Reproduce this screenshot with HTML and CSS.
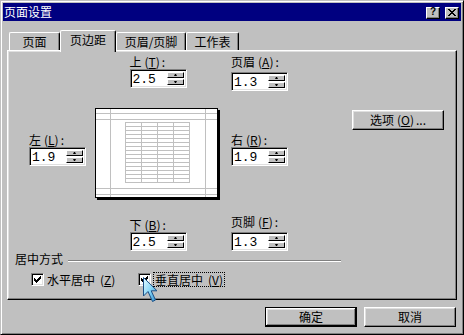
FILE: index.html
```html
<!DOCTYPE html>
<html lang="zh-CN">
<head>
<meta charset="utf-8">
<link rel="stylesheet" href="styles.css">
</head>
<body>
<div class="window">
  <div class="titlebar">
    <span class="title">页面设置</span>
    <div class="tb-buttons">
      <span class="tb-btn help">?</span>
      <span class="tb-btn close"><svg width="8" height="7" viewBox="0 0 8 7" shape-rendering="crispEdges"><path d="M0 0h2v1h-2zM6 0h2v1h-2zM1 1h2v1h-2zM5 1h2v1h-2zM2 2h4v1h-4zM3 3h2v1h-2zM2 4h4v1h-4zM1 5h2v1h-2zM5 5h2v1h-2zM0 6h2v1h-2zM6 6h2v1h-2z" fill="#000"/></svg></span>
    </div>
  </div>
  <div class="dialog">
    <div class="tabs">
      <div class="tab t1">页面</div>
      <div class="tab sel t2">页边距</div>
      <div class="tab t3">页眉/页脚</div>
      <div class="tab t4">工作表</div>
    </div>
    <div class="panel">
      <div class="margins">
        <div class="fld top">
          <div class="lbl">上<span class="acc">(<u>T</u>)</span>:</div>
          <div class="spin"><span class="val">2.5</span><span class="arrows"><span class="ab"><i class="up"></i></span><span class="ab"><i class="dn"></i></span></span></div>
        </div>
        <div class="fld header">
          <div class="lbl gap">页眉<span class="acc">(<u>A</u>)</span>:</div>
          <div class="spin"><span class="val">1.3</span><span class="arrows"><span class="ab"><i class="up"></i></span><span class="ab"><i class="dn"></i></span></span></div>
        </div>
        <div class="fld left">
          <div class="lbl">左<span class="acc">(<u>L</u>)</span>:</div>
          <div class="spin"><span class="val">1.9</span><span class="arrows"><span class="ab"><i class="up"></i></span><span class="ab"><i class="dn"></i></span></span></div>
        </div>
        <svg class="preview" width="125" height="92" viewBox="0 0 125 92" shape-rendering="crispEdges">
          <rect x="2" y="2" width="123" height="90" fill="#000"/>
          <rect x="0.5" y="0.5" width="122" height="89" fill="#fff" stroke="#000"/>
          <g stroke="#c0c0c0" fill="none">
            <path d="M15.5 1V89M110.5 1V89M1 5.5H122M1 11.5H122M1 80.5H122M1 86.5H122"/>
            <rect x="30.5" y="14.5" width="64" height="60"/>
            <path d="M46.5 14V75M62.5 14V75M78.5 14V75"/>
            <path d="M30 18.5H95M30 22.5H95M30 26.5H95M30 30.5H95M30 34.5H95M30 38.5H95M30 42.5H95M30 46.5H95M30 50.5H95M30 54.5H95M30 58.5H95M30 62.5H95M30 66.5H95M30 70.5H95"/>
          </g>
        </svg>
        <div class="fld right">
          <div class="lbl">右<span class="acc">(<u>R</u>)</span>:</div>
          <div class="spin"><span class="val">1.9</span><span class="arrows"><span class="ab"><i class="up"></i></span><span class="ab"><i class="dn"></i></span></span></div>
        </div>
        <button class="btn options">选项<span class="acc">(<u>O</u>)</span>...</button>
        <div class="fld bottom">
          <div class="lbl">下<span class="acc">(<u>B</u>)</span>:</div>
          <div class="spin"><span class="val">2.5</span><span class="arrows"><span class="ab"><i class="up"></i></span><span class="ab"><i class="dn"></i></span></span></div>
        </div>
        <div class="fld footer">
          <div class="lbl gap">页脚<span class="acc">(<u>F</u>)</span>:</div>
          <div class="spin"><span class="val">1.3</span><span class="arrows"><span class="ab"><i class="up"></i></span><span class="ab"><i class="dn"></i></span></span></div>
        </div>
      </div>
      <div class="group">
        <div class="group-head"><span>居中方式</span><span class="etch"></span></div>
        <div class="checks">
          <div class="check c1">
            <span class="box"><svg width="7" height="7" viewBox="0 0 7 7" shape-rendering="crispEdges"><path d="M0 2h1v3H0zM1 3h1v3H1zM2 4h1v3H2zM3 3h1v3H3zM4 2h1v3H4zM5 1h1v3H5zM6 0h1v3H6z" fill="#000"/></svg></span>
            <span class="ctext">水平居中<span class="acc">(<u>Z</u>)</span></span>
          </div>
          <div class="check c2">
            <span class="box"><svg width="7" height="7" viewBox="0 0 7 7" shape-rendering="crispEdges"><path d="M0 2h1v3H0zM1 3h1v3H1zM2 4h1v3H2zM3 3h1v3H3zM4 2h1v3H4zM5 1h1v3H5zM6 0h1v3H6z" fill="#000"/></svg></span>
            <span class="ctext focus">垂直居中<span class="acc">(<u>V</u>)</span></span>
          </div>
        </div>
      </div>
    </div>
    <div class="actions">
      <button class="btn default">确定</button>
      <button class="btn">取消</button>
    </div>
  </div>
  <svg class="cursor" width="16" height="26" viewBox="0 0 16 26">
    <defs>
      <linearGradient id="cg" x1="0" y1="0" x2="1" y2="1">
        <stop offset="0" stop-color="#e8fbff"/>
        <stop offset="0.5" stop-color="#8ad8f8"/>
        <stop offset="1" stop-color="#2e8fd0"/>
      </linearGradient>
    </defs>
    <path d="M0.5 0.5V19L5 14.5L9.5 24.5L12.5 23L8.2 13.8H14Z" fill="url(#cg)" stroke="#1b4f86" stroke-width="1" stroke-linejoin="round"/>
  </svg>
</div>
</body>
</html>
```

FILE: styles.css
```css
* { box-sizing: border-box; margin: 0; padding: 0; }
html, body { width: 464px; height: 335px; overflow: hidden; background: #c0c0c0; }
body {
  font-family: "Noto Sans CJK SC", "Liberation Sans", sans-serif;
  font-size: 12px;
  line-height: 14px;
  color: #000;
}
u { text-decoration: underline; text-underline-offset: 1px; }
.acc { margin: 0 2px 0 3px; }

.window {
  position: relative;
  width: 464px;
  height: 335px;
  border: 1px solid;
  border-color: #c0c0c0 #000 #000 #c0c0c0;
  box-shadow: inset 1px 1px #fff, inset -1px -1px #808080;
  padding: 2px;
}

.titlebar {
  height: 18px;
  background: #000080;
  color: #fff;
  display: flex;
  align-items: center;
  justify-content: space-between;
  padding: 0 2px 0 1px;
}
.title { font-size: 12px; line-height: 18px; }
.tb-buttons { display: flex; gap: 5px; margin-top: 1px; }
.tb-btn {
  width: 14px;
  height: 12px;
  background: #c0c0c0;
  border: 1px solid;
  border-color: #fff #000 #000 #fff;
  box-shadow: inset -1px -1px #808080;
  display: flex;
  align-items: center;
  justify-content: center;
  color: #000;
}
.help { font-family: "Liberation Sans", sans-serif; font-weight: bold; font-size: 10px; line-height: 10px; padding-bottom: 1px; }
.close svg { display: block; margin-bottom: 1px; }

.dialog { padding: 9px 4px 0 4px; }

.tabs {
  display: flex;
  align-items: flex-end;
  height: 20px;
  padding-left: 2px;
  position: relative;
  z-index: 1;
}
.tab {
  height: 18px;
  background: #c0c0c0;
  border-top: 1px solid #fff;
  border-left: 1px solid #fff;
  border-right: 1px solid #000;
  box-shadow: inset -1px 0 #808080;
  border-radius: 2px 2px 0 0;
  text-align: center;
  padding-top: 2px;
  white-space: nowrap;
}
.tab.sel { height: 22px; margin-bottom: -2px; }
.t1 { width: 51px; }
.t2 { width: 56px; }
.t3 { width: 70px; }
.t4 { width: 53px; }

.panel {
  height: 250px;
  border: 1px solid;
  border-color: #fff #000 #000 #fff;
  box-shadow: inset -1px -1px #808080, inset 1px 1px #dfdfdf;
  padding-top: 4px;
}

.margins {
  display: grid;
  grid-template-columns: 57px 9px 126px 10px 58px 63px 92px;
  grid-template-rows: 53px 92px auto;
  padding-left: 21px;
}
.fld { display: flex; flex-direction: column; align-self: start; width: 57px; }
.lbl { height: 14px; white-space: nowrap; }
.lbl.gap { margin-bottom: 3px; }
.top { grid-column: 3; grid-row: 1; justify-self: center; }
.header { grid-column: 5; grid-row: 1; }
.left { grid-column: 1; grid-row: 2; margin-top: 25px; }
.preview { grid-column: 3; grid-row: 2; display: block; }
.right { grid-column: 5; grid-row: 2; margin-top: 25px; }
.options { grid-column: 7; grid-row: 2; align-self: start; margin-top: 2px; width: 92px; }
.bottom { grid-column: 3; grid-row: 3; justify-self: center; margin-top: 18px; }
.footer { grid-column: 5; grid-row: 3; margin-top: 15px; }

.spin {
  display: flex;
  width: 57px;
  height: 19px;
  border: 1px solid;
  border-color: #808080 #fff #fff #808080;
  box-shadow: inset 1px 1px #000, inset -1px -1px #dfdfdf;
  background: #fff;
  padding: 2px;
}
.val {
  flex: 1;
  font-family: "Liberation Mono", monospace;
  font-size: 13px;
  line-height: 15px;
}
.arrows { width: 17px; display: flex; flex-direction: column; gap: 1px; }
.ab {
  flex: 1;
  background: #c0c0c0;
  border: 1px solid;
  border-color: #fff #000 #000 #fff;
  display: flex;
  align-items: center;
  justify-content: center;
}
.ab i { display: block; width: 1px; height: 0; border-left: 1px solid transparent; border-right: 1px solid transparent; box-sizing: content-box; }
.ab .up { border-bottom: 2px solid #000; }
.ab .dn { border-top: 2px solid #000; }

.btn {
  height: 20px;
  background: #c0c0c0;
  border: 1px solid;
  border-color: #fff #000 #000 #fff;
  box-shadow: inset -1px -1px #808080, inset 1px 1px #dfdfdf;
  font-family: "Noto Sans CJK SC", "Liberation Sans", sans-serif;
  font-size: 12px;
  line-height: 14px;
  color: #000;
  text-align: center;
}
.btn.default {
  border: 1px solid #000;
  box-shadow: inset -1px -1px #000, inset 1px 1px #fff, inset -2px -2px #808080, inset 2px 2px #dfdfdf;
}

.group { margin: 1px 0 0 7px; }
.group-head { display: flex; width: 326px; height: 14px; }
.etch {
  flex: 1;
  margin: 8px 0 0 5px;
  height: 2px;
  border-top: 1px solid #808080;
  border-bottom: 1px solid #fff;
}
.checks { display: flex; margin: 6px 0 0 16px; }
.check { display: flex; align-items: center; height: 15px; }
.c1 { width: 107px; }
.box {
  width: 13px;
  height: 13px;
  border: 1px solid;
  border-color: #808080 #fff #fff #808080;
  box-shadow: inset 1px 1px #000, inset -1px -1px #dfdfdf;
  background: #fff;
  display: flex;
  align-items: center;
  justify-content: center;
}
.box svg { display: block; }
.ctext { margin-left: 3px; white-space: nowrap; }
.ctext .acc { margin: 0 0 0 5px; }
.focus { margin-left: 2px; border: 1px dotted #000; padding: 0 1px; line-height: 13px; }

.actions {
  display: flex;
  justify-content: flex-end;
  gap: 7px;
  margin-top: 7px;
  padding-right: 1px;
}
.actions .btn { width: 92px; }

.cursor { position: absolute; left: 142px; top: 276px; }
```
